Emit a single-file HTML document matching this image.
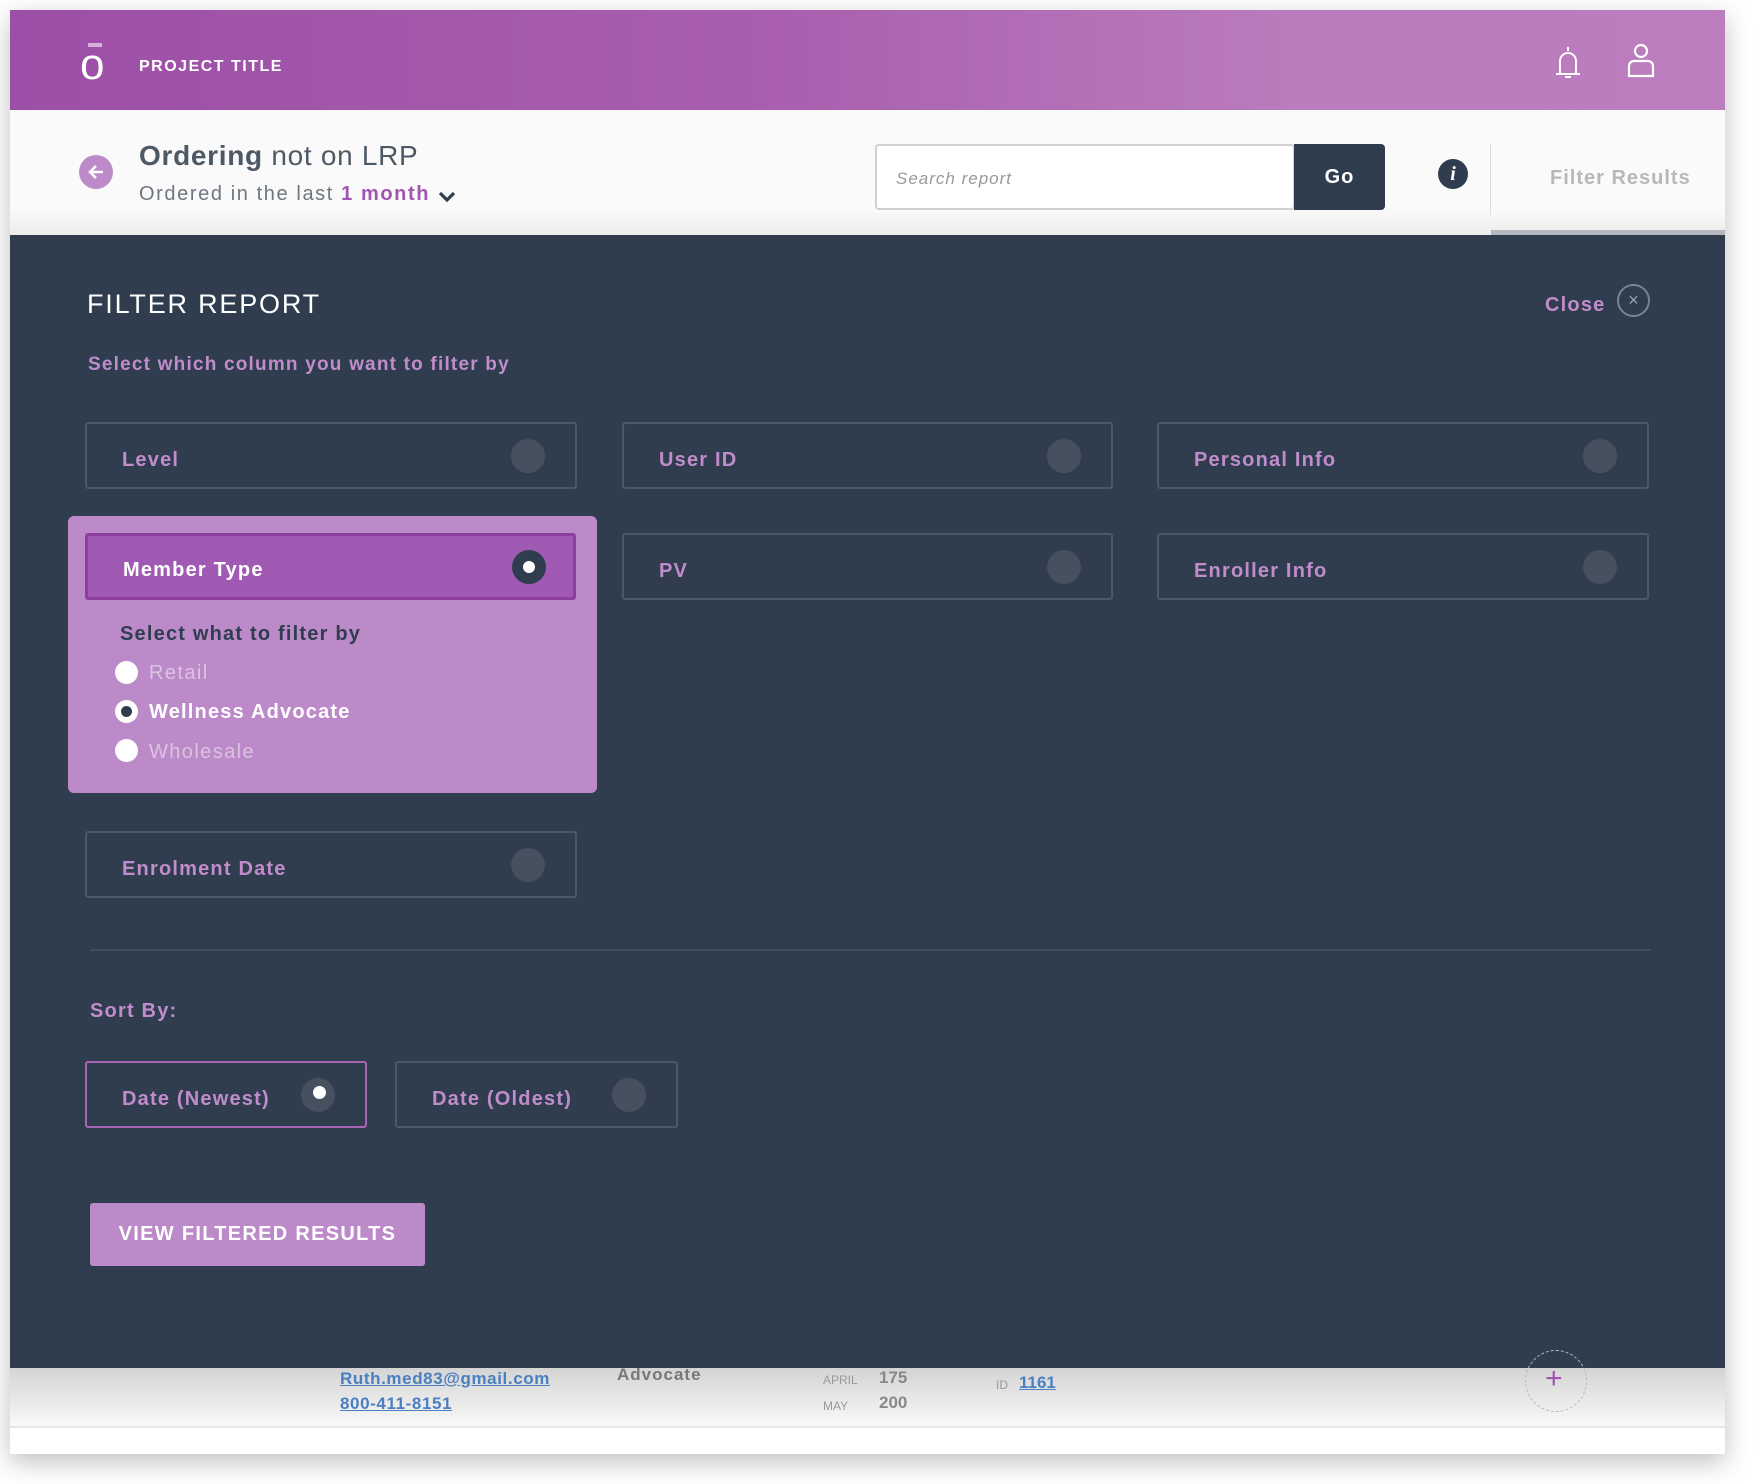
<!DOCTYPE html>
<html><head><meta charset="utf-8"><style>
*{box-sizing:border-box;margin:0;padding:0}
body{width:1756px;height:1484px;background:#fff;font-family:"Liberation Sans",sans-serif;position:relative;overflow:hidden}
.a{position:absolute}
.frame{left:10px;top:10px;width:1715px;height:1444px;box-shadow:0 8px 24px rgba(0,0,0,.25);background:#fff;overflow:hidden}
.card{position:absolute;border:2px solid #4c5868;border-radius:3px;height:67px;color:#c08ccc;font-size:20px;letter-spacing:1.2px;font-weight:bold}
.card span{position:absolute;left:35px;top:25px}
.card i{position:absolute;right:30px;top:15px;width:34px;height:34px;border-radius:50%;background:#46505f}
.lbl{color:#c08ccc;font-weight:bold;letter-spacing:1.2px}
</style></head><body>
<div class="a frame">
 <div class="a" style="left:0;top:0;width:1715px;height:100px;background:linear-gradient(90deg,#9c4fa6 0%,#a95fae 45%,#ba7cbd 75%,#bb7dbd 100%)"></div>
 <div class="a" style="left:78px;top:33px;width:14px;height:4px;background:#d6b0db"></div>
 <div class="a" style="left:70px;top:33px;color:#fff;font-size:44px;line-height:1">o</div>
 <div class="a" style="left:129px;top:48px;color:#fff;font-size:16px;font-weight:bold;letter-spacing:1.5px">PROJECT TITLE</div>
 <svg class="a" style="left:1543px;top:34px" width="30" height="40" viewBox="0 0 30 40" fill="none" stroke="#fff" stroke-width="2"><path d="M15 3v4M7 30V17a8 8 0 0 1 16 0v13M3 30h24M12 33h6"/></svg>
 <svg class="a" style="left:1615px;top:32px" width="32" height="40" viewBox="0 0 32 40" fill="none" stroke="#fff" stroke-width="2.2"><circle cx="16" cy="9" r="6"/><path d="M4 34V24a5 5 0 0 1 5-5h14a5 5 0 0 1 5 5v10z"/></svg>
 <div class="a" style="left:0;top:100px;width:1715px;height:125px;background:linear-gradient(#fafafa 80%,#ececec)"></div>
 <div class="a" style="left:69px;top:145px;width:34px;height:34px;border-radius:50%;background:#bc8ac8"></div>
 <svg class="a" style="left:76px;top:152px" width="20" height="20" viewBox="0 0 20 20" fill="none" stroke="#fff" stroke-width="2.5"><path d="M17 10H4M10 4l-6 6 6 6"/></svg>
 <div class="a" style="left:129px;top:130px;font-size:28px;color:#4e5966;letter-spacing:.7px"><b>Ordering</b> not on LRP</div>
 <div class="a" style="left:129px;top:173px;font-size:20px;color:#6e7680;letter-spacing:1.6px">Ordered in the last <b style="color:#a055b0">1 month</b></div>
 <svg class="a" style="left:428px;top:180px" width="18" height="14" viewBox="0 0 18 14" fill="none" stroke="#2f3d4f" stroke-width="3.2"><path d="M2 3l7 7 7-7"/></svg>
 <div class="a" style="left:865px;top:134px;width:420px;height:66px;border:2px solid #d0d0d0;border-radius:4px;background:#fff"></div>
 <div class="a" style="left:886px;top:159px;font-size:17px;font-style:italic;color:#999;letter-spacing:1px">Search report</div>
 <div class="a" style="left:1284px;top:134px;width:91px;height:66px;background:#2f3d4f;border-radius:0 4px 4px 0;color:#fff;font-size:20px;font-weight:bold;text-align:center;line-height:66px;letter-spacing:1px">Go</div>
 <div class="a" style="left:1428px;top:149px;width:30px;height:30px;border-radius:50%;background:#2f3d4f;color:#fff;font:italic bold 20px 'Liberation Serif',serif;text-align:center;line-height:30px">i</div>
 <div class="a" style="left:1480px;top:133px;width:1px;height:72px;background:#ddd"></div>
 <div class="a" style="left:1540px;top:157px;font-size:20px;color:#b8b8b8;font-weight:bold;letter-spacing:1px">Filter Results</div>
 <div class="a" style="left:1481px;top:220px;width:234px;height:5px;background:#b5b9bf"></div>
 <div class="a" style="left:0;top:225px;width:1715px;height:1133px;background:#2f3d4f"></div>
 <div class="a" style="left:77px;top:279px;font-size:27px;color:#fff;letter-spacing:1.8px">FILTER REPORT</div>
 <div class="a lbl" style="left:1535px;top:284px;font-size:20px">Close</div>
 <div class="a" style="left:1607px;top:274px;width:33px;height:33px;border-radius:50%;border:2px solid #7a8491;color:#9aa2ad;font-size:18px;text-align:center;line-height:28px">×</div>
 <div class="a lbl" style="left:78px;top:344px;font-size:19px">Select which column you want to filter by</div>

 <div class="card" style="left:75px;top:412px;width:492px"><span>Level</span><i></i></div>
 <div class="card" style="left:612px;top:412px;width:491px"><span>User ID</span><i></i></div>
 <div class="card" style="left:1147px;top:412px;width:492px"><span>Personal Info</span><i></i></div>
 <div class="card" style="left:612px;top:523px;width:491px"><span>PV</span><i></i></div>
 <div class="card" style="left:1147px;top:523px;width:492px"><span>Enroller Info</span><i></i></div>
 <div class="card" style="left:75px;top:821px;width:492px"><span>Enrolment Date</span><i></i></div>

 <div class="a" style="left:58px;top:506px;width:529px;height:277px;background:#bc8ac8;border-radius:6px"></div>
 <div class="a" style="left:75px;top:523px;width:491px;height:67px;background:#a05ab3;border:3px solid #8c3f9f;border-radius:3px"></div>
 <div class="a" style="left:113px;top:549px;font-size:20px;color:#fff;font-weight:bold;letter-spacing:1.2px">Member Type</div>
 <div class="a" style="left:502px;top:540px;width:34px;height:34px;border-radius:50%;background:#2f3d4f"></div>
 <div class="a" style="left:513px;top:551px;width:12px;height:12px;border-radius:50%;background:#fff"></div>
 <div class="a" style="left:110px;top:613px;font-size:20px;color:#2f3d4f;font-weight:bold;letter-spacing:1.2px">Select what to filter by</div>
 <div class="a" style="left:105px;top:651px;width:23px;height:23px;border-radius:50%;background:#fff"></div>
 <div class="a" style="left:139px;top:652px;font-size:20px;color:#dcc3e2;letter-spacing:1.4px">Retail</div>
 <div class="a" style="left:105px;top:690px;width:23px;height:23px;border-radius:50%;background:#fff"></div>
 <div class="a" style="left:111px;top:696px;width:11px;height:11px;border-radius:50%;background:#2f3d4f"></div>
 <div class="a" style="left:139px;top:691px;font-size:20px;color:#fff;font-weight:bold;letter-spacing:1.2px">Wellness Advocate</div>
 <div class="a" style="left:105px;top:729px;width:23px;height:23px;border-radius:50%;background:#fff"></div>
 <div class="a" style="left:139px;top:731px;font-size:20px;color:#dcc3e2;letter-spacing:1.4px">Wholesale</div>

 <div class="a" style="left:80px;top:939px;width:1561px;height:2px;background:#414d5d"></div>
 <div class="a lbl" style="left:80px;top:990px;font-size:20px">Sort By:</div>
 <div class="card" style="left:75px;top:1051px;width:282px;border-color:#a865b5"><span>Date (Newest)</span><i></i></div>
 <div class="a" style="left:303px;top:1076px;width:13px;height:13px;border-radius:50%;background:#fff"></div>
 <div class="card" style="left:385px;top:1051px;width:283px"><span>Date (Oldest)</span><i></i></div>
 <div class="a" style="left:80px;top:1193px;width:335px;height:63px;background:#bc8ac8;border-radius:3px;color:#fff;font-size:20px;font-weight:bold;letter-spacing:1.3px;text-align:center;line-height:63px">VIEW FILTERED RESULTS</div>

 <div class="a" style="left:0;top:1358px;width:1715px;height:60px;background:linear-gradient(#d4d4d4,#fafafa)"></div>
 <div class="a" style="left:330px;top:1359px;font-size:17px;color:#4a7fc1;text-decoration:underline;font-weight:bold;letter-spacing:.6px">Ruth.med83@gmail.com</div>
 <div class="a" style="left:330px;top:1384px;font-size:17px;color:#4a7fc1;text-decoration:underline;font-weight:bold;letter-spacing:.6px">800-411-8151</div>
 <div class="a" style="left:607px;top:1355px;font-size:17px;color:#777;font-weight:bold;letter-spacing:1px">Advocate</div>
 <div class="a" style="left:813px;top:1363px;font-size:12px;color:#999">APRIL</div>
 <div class="a" style="left:869px;top:1358px;font-size:17px;color:#888;font-weight:bold">175</div>
 <div class="a" style="left:813px;top:1389px;font-size:12px;color:#999">MAY</div>
 <div class="a" style="left:869px;top:1383px;font-size:17px;color:#888;font-weight:bold">200</div>
 <div class="a" style="left:986px;top:1368px;font-size:12px;color:#999">ID</div>
 <div class="a" style="left:1009px;top:1363px;font-size:17px;color:#4a7fc1;text-decoration:underline;font-weight:bold">1161</div>
 <div class="a" style="left:1515px;top:1340px;width:62px;height:62px;border-radius:50%;border:1.5px dashed #bbb"></div>
 <div class="a" style="left:1535px;top:1352px;font-size:30px;color:#a055b0">+</div>
 <div class="a" style="left:0;top:1416px;width:1715px;height:2px;background:#e6e6e6"></div>
</div>
</body></html>
